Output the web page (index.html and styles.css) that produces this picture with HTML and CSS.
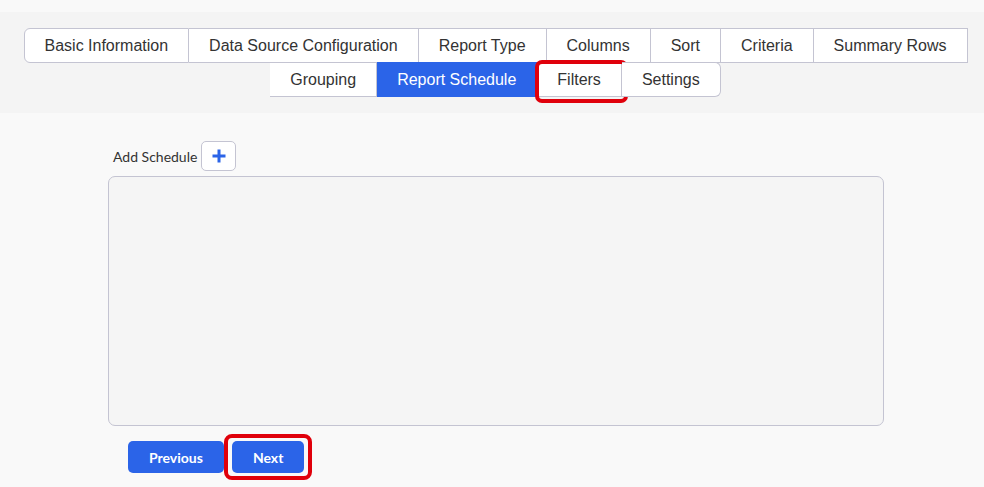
FILE: index.html
```html
<!DOCTYPE html>
<html lang="en">
<head>
    <meta charset="UTF-8">
    <meta name="viewport" content="width=device-width, initial-scale=1.0">
    <title>Report Wizard</title>
    <link rel="stylesheet" href="styles.css">
</head>
<body>
    <div class="page">
        <!-- Wizard steps -->
        <div class="steps-band">
            <ul class="steps">
                <li class="step">Basic Information</li>
                <li class="step">Data Source Configuration</li>
                <li class="step">Report Type</li>
                <li class="step">Columns</li>
                <li class="step">Sort</li>
                <li class="step">Criteria</li>
                <li class="step">Summary Rows</li>
                <li class="step">Grouping</li>
                <li class="step active">Report Schedule</li>
                <li class="step marked">Filters</li>
                <li class="step">Settings</li>
            </ul>
        </div>

        <main class="content">
            <div class="schedule-head">
                <span class="schedule-label">Add Schedule</span>
                <button class="add-btn" title="Add Schedule">
                    <svg width="16" height="16" viewBox="0 0 16 16">
                        <path d="M8 1.5v13M1.5 8h13" stroke="#2b64e8" stroke-width="3" fill="none"/>
                    </svg>
                </button>
            </div>

            <div class="schedule-list"></div>

            <div class="nav-buttons">
                <button class="nav-btn">Previous</button>
                <span class="marked">
                    <button class="nav-btn next-btn">Next</button>
                </span>
            </div>
        </main>
    </div>
</body>
</html>
```

FILE: styles.css
```css
/* General Styles */
body {
    background-color: #f9f9f9;
    color: #333;
    margin: 0;
    padding: 0;
    font-family: "Liberation Sans", Arial, sans-serif;
}

.page {
    padding-top: 12px;
}

/* Steps */
.steps-band {
    background-color: #f4f4f4;
    padding: 16px 0 17px 7px;
}

.steps {
    list-style: none;
    margin: 0;
    padding: 0;
    display: flex;
    flex-wrap: wrap;
    justify-content: center;
}

.step {
    height: 35px;
    box-sizing: border-box;
    padding: 0 20px;
    display: flex;
    align-items: center;
    font-size: 16px;
    color: #333;
    background-color: #fff;
    border: 1px solid #c4c4d2;
    border-left: none;
    margin-bottom: -1px;
    position: relative;
}

.step:first-child {
    border-left: 1px solid #c4c4d2;
    border-radius: 6px 0 0 6px;
}

.step:last-child {
    border-radius: 0 6px 6px 0;
}

.step.active {
    background-color: #2b64e8;
    border-color: #2b64e8;
    color: #fff;
}

/* red call-out frame */
.marked {
    position: relative;
}

.marked::after {
    content: "";
    position: absolute;
    border: 4px solid #e0000b;
    border-radius: 7px;
    pointer-events: none;
}

.step.marked::after {
    top: -3px;
    left: -2px;
    right: -7px;
    bottom: -7px;
}

/* Schedule */
.content {
    width: 776px;
    margin: 0 auto;
    padding: 28px 0 20px 8px;
    font-family: Lato, "Noto Sans", sans-serif;
}

.schedule-head {
    display: flex;
    align-items: center;
    gap: 4px;
    padding-left: 5px;
}

.schedule-label {
    font-size: 14px;
    color: #333;
}

.add-btn {
    width: 35px;
    height: 30px;
    background-color: #fff;
    border: 1px solid #c4c4d2;
    border-radius: 5px;
    display: flex;
    align-items: center;
    justify-content: center;
    padding: 0;
    cursor: pointer;
}

.schedule-list {
    margin-top: 5px;
    height: 250px;
    box-sizing: border-box;
    background-color: #f5f5f5;
    border: 1px solid #c4c4d2;
    border-radius: 7px;
}

/* Buttons */
.nav-buttons {
    display: flex;
    gap: 8px;
    padding: 15px 0 0 20px;
}

.nav-buttons .marked {
    display: flex;
}

.nav-btn {
    height: 32px;
    min-width: 72px;
    padding: 0 21px;
    background-color: #2b64e8;
    color: #fff;
    border: none;
    border-radius: 5px;
    font-family: Lato, "Noto Sans", sans-serif;
    font-weight: bold;
    font-size: 14px;
    cursor: pointer;
}

.nav-buttons .marked::after {
    top: -7px;
    left: -8px;
    right: -8px;
    bottom: -7px;
    border-radius: 8px;
}
```
